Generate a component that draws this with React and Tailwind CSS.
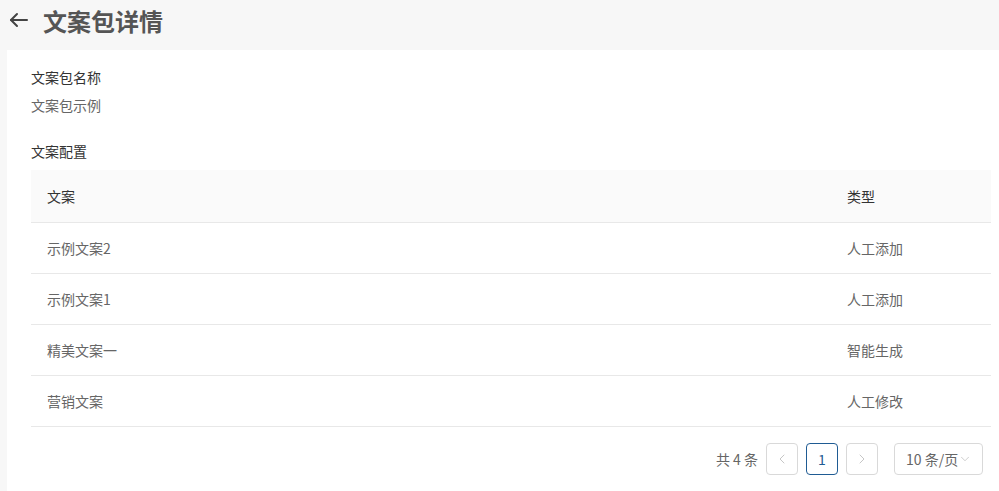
import { ChevronLeft, ChevronRight, ChevronDown } from 'lucide-react'

const rows = [
  { text: '示例文案2', type: '人工添加' },
  { text: '示例文案1', type: '人工添加' },
  { text: '精美文案一', type: '智能生成' },
  { text: '营销文案', type: '人工修改' },
]

export default function App() {
  return (
    <div
      className="w-[999px] h-[491px] overflow-hidden bg-[#f7f7f7] flex flex-col"
      style={{ fontFamily: '"Microsoft YaHei", "Noto Sans CJK SC", "Liberation Sans", sans-serif' }}
    >
      {/* Header */}
      <div className="h-[50px] flex items-start pt-[5px] pl-[9px]">
        <svg width="20" height="16" viewBox="0 0 20 16" className="mt-[7px] text-[#444]" fill="none" stroke="currentColor" strokeWidth="2" strokeLinecap="round" strokeLinejoin="round">
          <path d="M2 8h16" />
          <path d="M8 2L2 8l6 6" />
        </svg>
        <h1 className="ml-[14px] text-[24px] leading-[32px] font-bold text-[#555]">文案包详情</h1>
      </div>

      {/* Card */}
      <div className="flex-1 ml-[7px] bg-white pt-[16px] pl-[24px] pr-[8px]">
        <div className="text-[14px] leading-[22px] text-[#333]">文案包名称</div>
        <div className="mt-[6px] text-[14px] leading-[22px] text-[#666]">文案包示例</div>
        <div className="mt-[24px] text-[14px] leading-[22px] text-[#333]">文案配置</div>

        {/* Table */}
        <div className="mt-[8px] text-[14px]">
          <div className="h-[53px] flex items-center bg-[#fafafa] border-b border-[#e8e8e8] text-[#333]">
            <div className="flex-1 pl-[16px]">文案</div>
            <div className="w-[160px] pl-[16px]">类型</div>
          </div>
          {rows.map((r, i) => (
            <div key={i} className="h-[51px] flex items-center border-b border-[#e8e8e8] text-[#666]">
              <div className="flex-1 pl-[16px]">{r.text}</div>
              <div className="w-[160px] pl-[16px]">{r.type}</div>
            </div>
          ))}
        </div>

        {/* Pagination */}
        <div className="mt-[16px] flex items-center justify-end pr-[8px] text-[14px] text-[#666]">
          <span className="mr-[8px]">共 4 条</span>
          <button className="w-[32px] h-[32px] flex items-center justify-center border border-[#d9d9d9] rounded-[4px] text-[#bbb]">
            <ChevronLeft className="w-[16px] h-[16px]" strokeWidth={1.25} />
          </button>
          <button className="ml-[8px] w-[32px] h-[32px] flex items-center justify-center border border-[#1f5b93] rounded-[4px] text-[#1f5b93]">
            1
          </button>
          <button className="ml-[8px] w-[32px] h-[32px] flex items-center justify-center border border-[#d9d9d9] rounded-[4px] text-[#bbb]">
            <ChevronRight className="w-[16px] h-[16px]" strokeWidth={1.25} />
          </button>
          <div className="ml-[16px] w-[89px] h-[32px] flex items-center pl-[11px] border border-[#d9d9d9] rounded-[4px] text-[#666]">
            <span>10 条/页</span>
            <ChevronDown className="w-[14px] h-[14px] text-[#bbb]" strokeWidth={1.25} />
          </div>
        </div>
      </div>
    </div>
  )
}
